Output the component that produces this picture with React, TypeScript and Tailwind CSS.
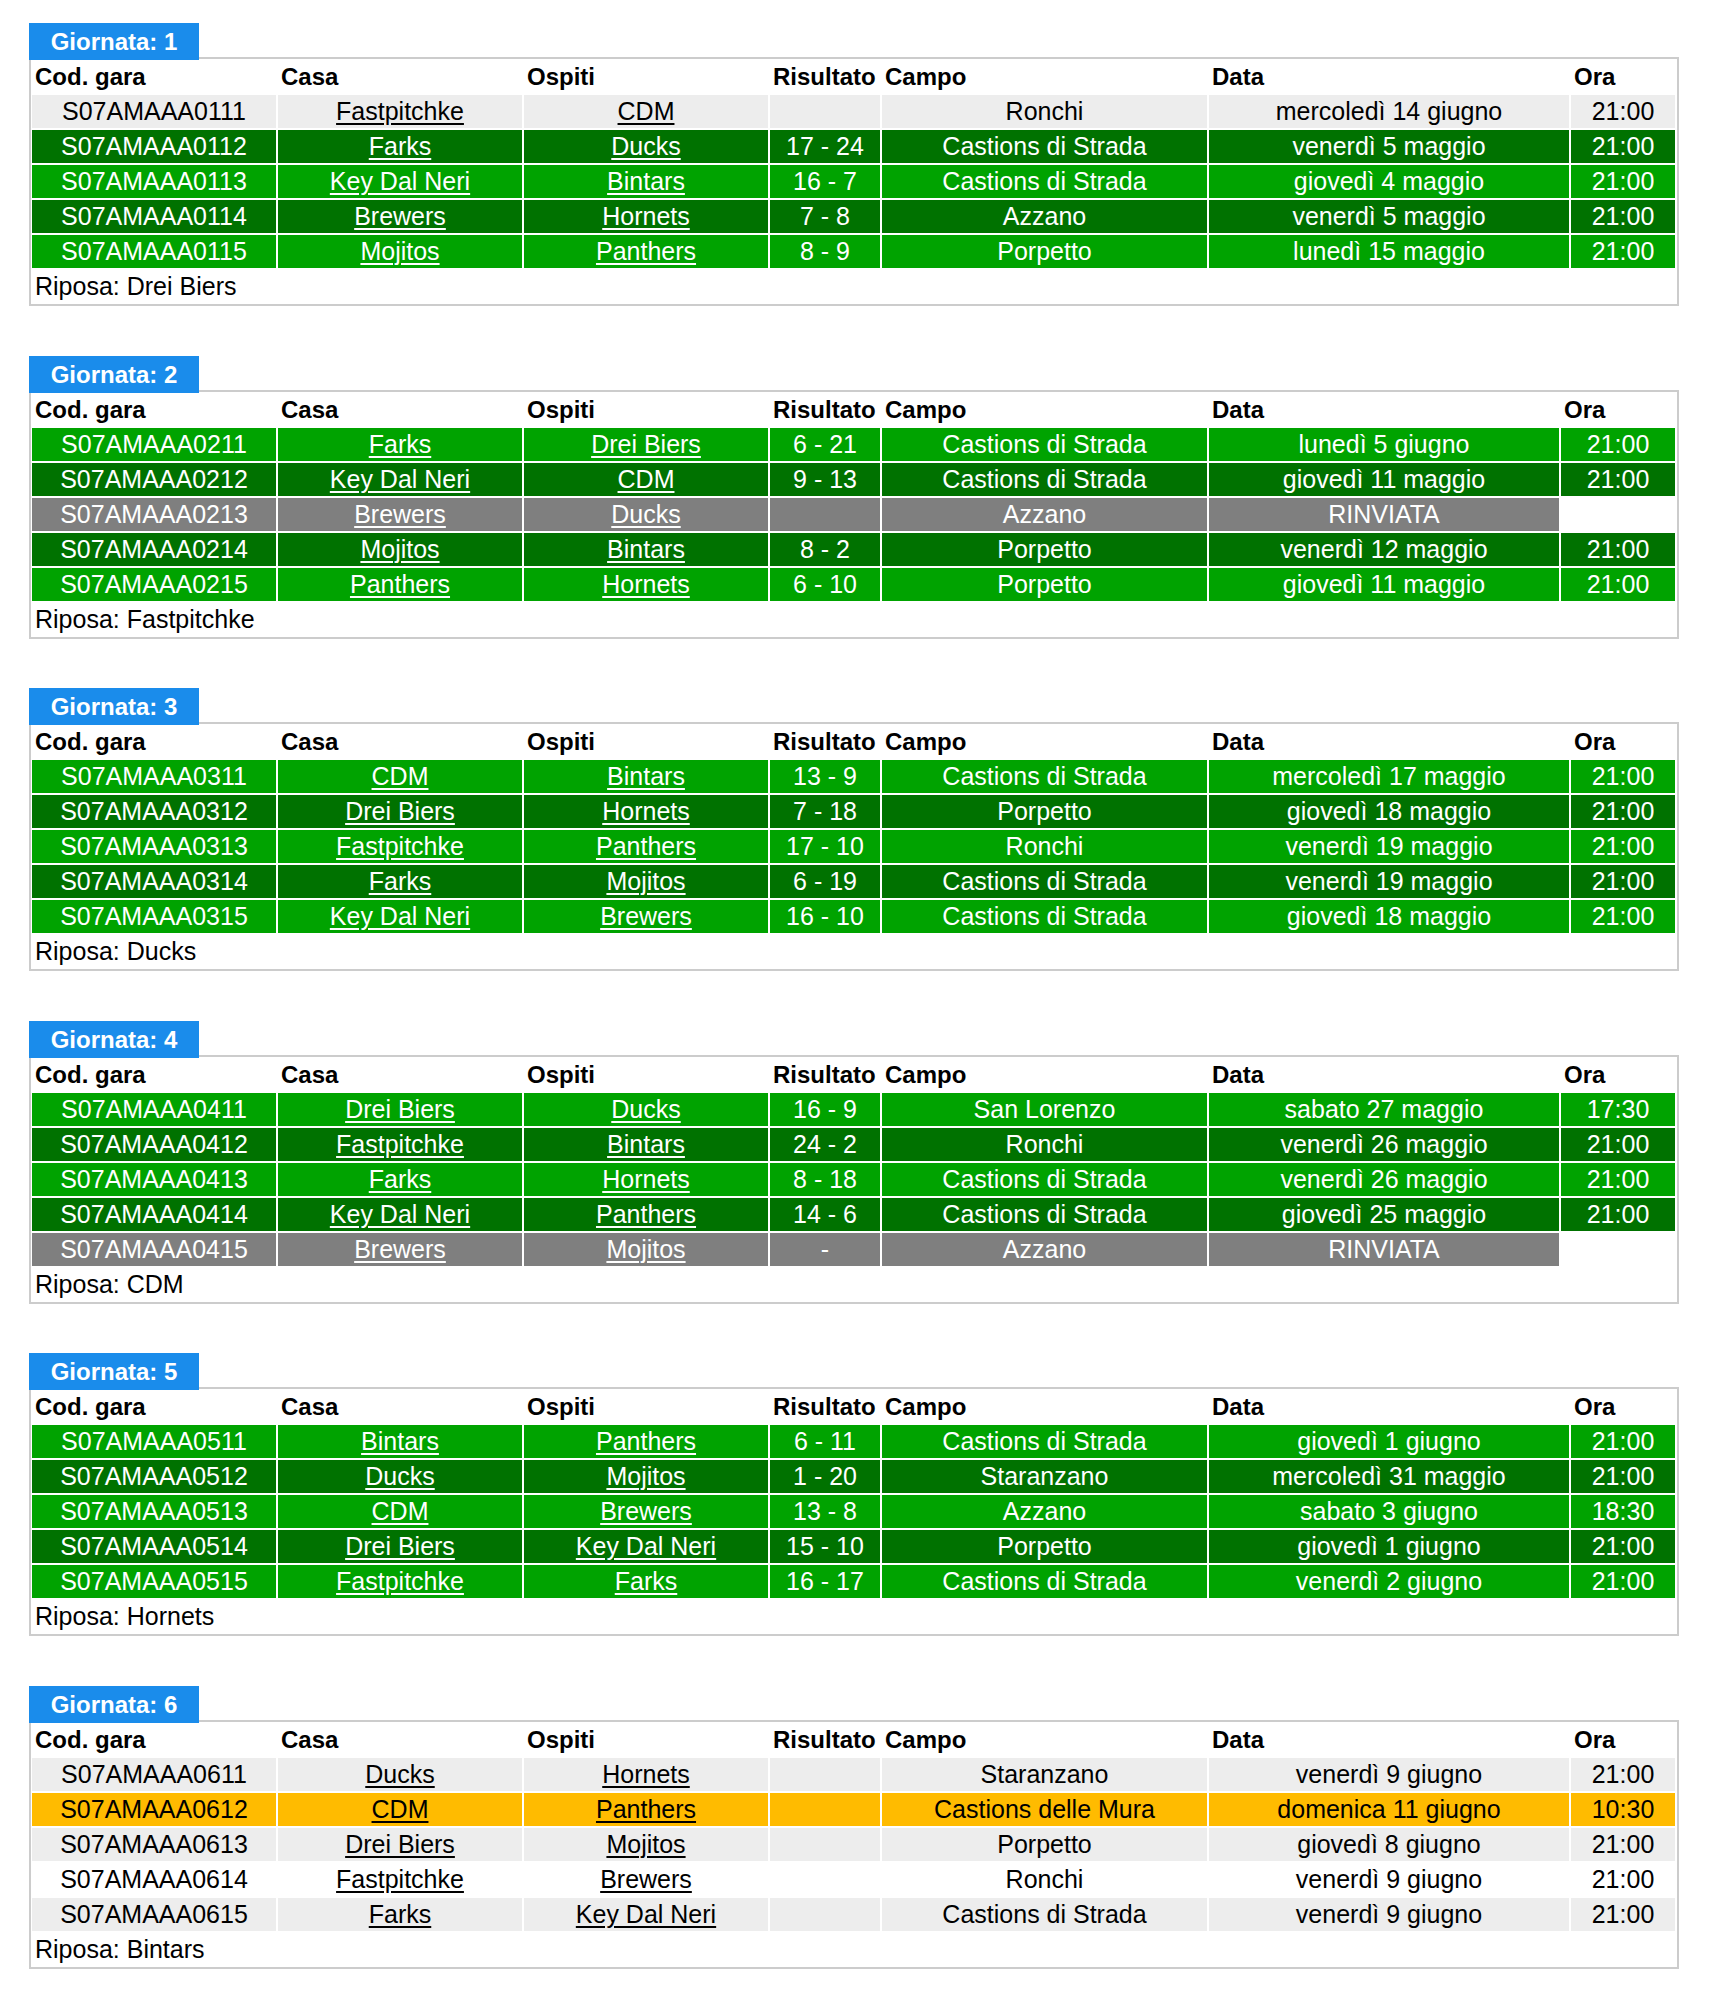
import React from "react";

type Kind = "light" | "white" | "dark" | "bright" | "gray" | "orange";
type Row = {
  code: string;
  home: string;
  away: string;
  score: string;
  field: string;
  date: string;
  time: string | null;
  kind: Kind;
};
type Round = { n: number; narrow: boolean; rest: string; rows: Row[] };

const R = (
  code: string,
  home: string,
  away: string,
  score: string,
  field: string,
  date: string,
  time: string | null,
  kind: Kind
): Row => ({ code, home, away, score, field, date, time, kind });

const rounds: Round[] = [
  {
    n: 1,
    narrow: false,
    rest: "Drei Biers",
    rows: [
      R("S07AMAAA0111", "Fastpitchke", "CDM", "", "Ronchi", "mercoledì 14 giugno", "21:00", "light"),
      R("S07AMAAA0112", "Farks", "Ducks", "17 - 24", "Castions di Strada", "venerdì 5 maggio", "21:00", "dark"),
      R("S07AMAAA0113", "Key Dal Neri", "Bintars", "16 - 7", "Castions di Strada", "giovedì 4 maggio", "21:00", "bright"),
      R("S07AMAAA0114", "Brewers", "Hornets", "7 - 8", "Azzano", "venerdì 5 maggio", "21:00", "dark"),
      R("S07AMAAA0115", "Mojitos", "Panthers", "8 - 9", "Porpetto", "lunedì 15 maggio", "21:00", "bright"),
    ],
  },
  {
    n: 2,
    narrow: true,
    rest: "Fastpitchke",
    rows: [
      R("S07AMAAA0211", "Farks", "Drei Biers", "6 - 21", "Castions di Strada", "lunedì 5 giugno", "21:00", "bright"),
      R("S07AMAAA0212", "Key Dal Neri", "CDM", "9 - 13", "Castions di Strada", "giovedì 11 maggio", "21:00", "dark"),
      R("S07AMAAA0213", "Brewers", "Ducks", "", "Azzano", "RINVIATA", null, "gray"),
      R("S07AMAAA0214", "Mojitos", "Bintars", "8 - 2", "Porpetto", "venerdì 12 maggio", "21:00", "dark"),
      R("S07AMAAA0215", "Panthers", "Hornets", "6 - 10", "Porpetto", "giovedì 11 maggio", "21:00", "bright"),
    ],
  },
  {
    n: 3,
    narrow: false,
    rest: "Ducks",
    rows: [
      R("S07AMAAA0311", "CDM", "Bintars", "13 - 9", "Castions di Strada", "mercoledì 17 maggio", "21:00", "bright"),
      R("S07AMAAA0312", "Drei Biers", "Hornets", "7 - 18", "Porpetto", "giovedì 18 maggio", "21:00", "dark"),
      R("S07AMAAA0313", "Fastpitchke", "Panthers", "17 - 10", "Ronchi", "venerdì 19 maggio", "21:00", "bright"),
      R("S07AMAAA0314", "Farks", "Mojitos", "6 - 19", "Castions di Strada", "venerdì 19 maggio", "21:00", "dark"),
      R("S07AMAAA0315", "Key Dal Neri", "Brewers", "16 - 10", "Castions di Strada", "giovedì 18 maggio", "21:00", "bright"),
    ],
  },
  {
    n: 4,
    narrow: true,
    rest: "CDM",
    rows: [
      R("S07AMAAA0411", "Drei Biers", "Ducks", "16 - 9", "San Lorenzo", "sabato 27 maggio", "17:30", "bright"),
      R("S07AMAAA0412", "Fastpitchke", "Bintars", "24 - 2", "Ronchi", "venerdì 26 maggio", "21:00", "dark"),
      R("S07AMAAA0413", "Farks", "Hornets", "8 - 18", "Castions di Strada", "venerdì 26 maggio", "21:00", "bright"),
      R("S07AMAAA0414", "Key Dal Neri", "Panthers", "14 - 6", "Castions di Strada", "giovedì 25 maggio", "21:00", "dark"),
      R("S07AMAAA0415", "Brewers", "Mojitos", "-", "Azzano", "RINVIATA", null, "gray"),
    ],
  },
  {
    n: 5,
    narrow: false,
    rest: "Hornets",
    rows: [
      R("S07AMAAA0511", "Bintars", "Panthers", "6 - 11", "Castions di Strada", "giovedì 1 giugno", "21:00", "bright"),
      R("S07AMAAA0512", "Ducks", "Mojitos", "1 - 20", "Staranzano", "mercoledì 31 maggio", "21:00", "dark"),
      R("S07AMAAA0513", "CDM", "Brewers", "13 - 8", "Azzano", "sabato 3 giugno", "18:30", "bright"),
      R("S07AMAAA0514", "Drei Biers", "Key Dal Neri", "15 - 10", "Porpetto", "giovedì 1 giugno", "21:00", "dark"),
      R("S07AMAAA0515", "Fastpitchke", "Farks", "16 - 17", "Castions di Strada", "venerdì 2 giugno", "21:00", "bright"),
    ],
  },
  {
    n: 6,
    narrow: false,
    rest: "Bintars",
    rows: [
      R("S07AMAAA0611", "Ducks", "Hornets", "", "Staranzano", "venerdì 9 giugno", "21:00", "light"),
      R("S07AMAAA0612", "CDM", "Panthers", "", "Castions delle Mura", "domenica 11 giugno", "10:30", "orange"),
      R("S07AMAAA0613", "Drei Biers", "Mojitos", "", "Porpetto", "giovedì 8 giugno", "21:00", "light"),
      R("S07AMAAA0614", "Fastpitchke", "Brewers", "", "Ronchi", "venerdì 9 giugno", "21:00", "white"),
      R("S07AMAAA0615", "Farks", "Key Dal Neri", "", "Castions di Strada", "venerdì 9 giugno", "21:00", "light"),
    ],
  },
];

const kindClass: Record<Kind, string> = {
  light: "bg-[#ededed] text-black",
  white: "bg-white text-black",
  dark: "bg-[#007200] text-white",
  bright: "bg-[#00a300] text-white",
  gray: "bg-[#7f7f7f] text-white",
  orange: "bg-[#ffbb00] text-black",
};

function Cell({ kind, children }: { kind: Kind; children?: React.ReactNode }) {
  return (
    <div className={`h-[33px] leading-[33px] text-[25px] text-center whitespace-nowrap overflow-hidden ${kindClass[kind]}`}>
      {children}
    </div>
  );
}

function Team({ name }: { name: string }) {
  return <span className="underline decoration-[1.5px] underline-offset-[3px]">{name}</span>;
}

const headers = ["Cod. gara", "Casa", "Ospiti", "Risultato", "Campo", "Data", "Ora"];

function RoundTable({ round }: { round: Round }) {
  const gridClass = round.narrow
    ? "grid grid-cols-[244px_244px_244px_110px_325px_350px_114px] gap-[2px]"
    : "grid grid-cols-[244px_244px_244px_110px_325px_360px_104px] gap-[2px]";
  return (
    <div className="mb-[49.5px]">
      <div className="relative z-10 w-[170px] h-[37px] bg-[#1a8ceb] text-white font-bold text-[24px] leading-[37px] text-center">
        Giornata: {round.n}
      </div>
      <div className="-mt-[3px] w-[1650px] border-2 border-[#cccccc] bg-white pt-[1px] pb-[1px] pl-[1px] pr-[2px]">
        <div className={gridClass}>
          {headers.map((h) => (
            <div key={h} className="h-[33px] leading-[33px] text-[24px] font-bold pl-[3px] text-black whitespace-nowrap">
              {h}
            </div>
          ))}
          {round.rows.map((r) => (
            <React.Fragment key={r.code}>
              <Cell kind={r.kind}>{r.code}</Cell>
              <Cell kind={r.kind}>
                <Team name={r.home} />
              </Cell>
              <Cell kind={r.kind}>
                <Team name={r.away} />
              </Cell>
              <Cell kind={r.kind}>{r.score}</Cell>
              <Cell kind={r.kind}>{r.field}</Cell>
              <Cell kind={r.kind}>{r.date}</Cell>
              {r.time ? <Cell kind={r.kind}>{r.time}</Cell> : <div className="h-[33px]" />}
            </React.Fragment>
          ))}
          <div className="col-span-7 h-[33px] leading-[33px] text-[25px] pl-[3px] text-black">Riposa: {round.rest}</div>
        </div>
      </div>
    </div>
  );
}

export default function App() {
  return (
    <div
      className="min-h-[1993px] w-[1717px] bg-white pt-[23px] pl-[29px] text-[24px]"
      style={{ fontFamily: '"Liberation Sans", Arial, sans-serif' }}
    >
      {rounds.map((r) => (
        <RoundTable key={r.n} round={r} />
      ))}
    </div>
  );
}
